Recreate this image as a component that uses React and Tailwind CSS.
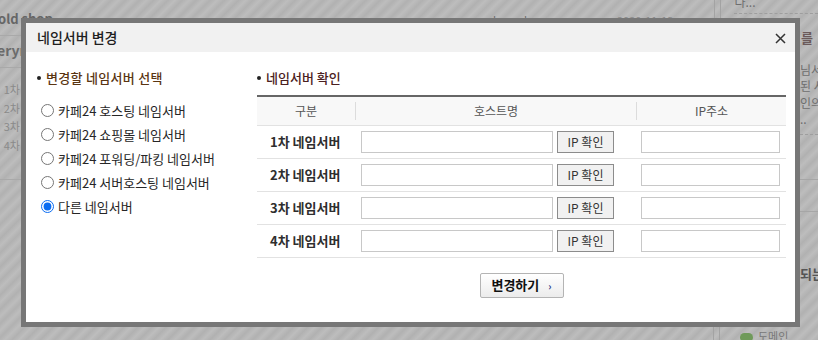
import React, { useState } from "react";

const rows = ["1차", "2차", "3차", "4차"];
const options = [
  "카페24 호스팅 네임서버",
  "카페24 쇼핑몰 네임서버",
  "카페24 포워딩/파킹 네임서버",
  "카페24 서버호스팅 네임서버",
  "다른 네임서버",
];

const kr = "font-['Noto_Sans_CJK_KR','Noto_Sans',sans-serif]";

export default function App() {
  const [picked, setPicked] = useState(4);

  return (
    <div
      className={`flex h-[340px] w-[818px] flex-col overflow-hidden bg-[repeating-linear-gradient(-45deg,#b1b1b1_0px,#bdbdbd_5px,#b1b1b1_10px)] ${kr}`}
    >
      {/* page behind the overlay, top strip */}
      <div className="flex h-[18px] shrink-0 text-[#6e6e6e]">
        <div className="mt-[11px] w-[60px] whitespace-nowrap text-[13px] leading-[16px] font-bold text-[#666] -ml-[2px]">
          old shop
        </div>
        <div className="ml-[435px] mt-[13px] flex w-[34px] justify-between text-[11px] leading-[14px]">
          <span>l</span>
          <span>l</span>
        </div>
        <div className="ml-[90px] mt-[13px] text-[11px] leading-[14px] text-[#8a8a8a]">2020-11-13</div>
        <div className="ml-[41px] h-full w-[7px] border-x border-[#a3a3a3]" />
        <div className="flex flex-1 flex-col pl-[13px]">
          <div className="-mt-[5px] text-[12px] leading-[14px]">다...</div>
          <div className="mt-[4px] border-b border-dashed border-[#9e9e9e]" />
        </div>
      </div>

      <div className="flex h-[309px] shrink-0">
        {/* page behind the overlay, left edge */}
        <div className="flex w-[21px] shrink-0 flex-col overflow-hidden text-[#7d7d7d]">
          <div className="border-b border-[#a9a9a9] mt-[17px]" />
          <div className="mt-[6px] whitespace-nowrap text-[14px] leading-[16px] font-bold text-[#6b6b6b] -ml-[3px]">
            eryn
          </div>
          <div className="mt-[9px] border-b border-[#a9a9a9]" />
          <div className="mt-[12px] flex flex-col items-end pr-[1px] text-[11px] leading-[18.5px] text-[#8a8a8a]">
            {rows.map((r) => (
              <span key={r}>{r}</span>
            ))}
          </div>
          <div className="mt-[25px] border-b border-[#a9a9a9]" />
        </div>

        {/* modal */}
        <div className="relative z-10 flex w-[779px] shrink-0 flex-col border-[5px] border-[#777777] bg-white">
          <div className="flex h-[29px] items-center justify-between bg-[#f1f1f1] pl-[11px] pr-[9px]">
            <span className="text-[14px] font-medium text-[#1e1e1e]">네임서버 변경</span>
            <svg width="11" height="11" viewBox="0 0 11 11" className="mt-[1px]">
              <path d="M1 1 L10 10 M10 1 L1 10" stroke="#333" strokeWidth="1.5" />
            </svg>
          </div>

          <div className="flex pl-[11px] pt-[16px]">
            <div className="flex w-[220px] shrink-0 flex-col">
              <div className="flex items-center gap-[5px] text-[13px] font-medium tracking-[0.3px] text-[#5a3512]">
                <span className="h-[4px] w-[4px] rounded-full bg-[#222]" />
                변경할 네임서버 선택
              </div>
              <div className="mt-[13px] flex flex-col gap-[4px] pl-[4px]">
                {options.map((o, i) => (
                  <label
                    key={o}
                    className="flex h-[20px] items-center gap-[4px] text-[13px] text-[#262626]"
                  >
                    <input
                      type="radio"
                      checked={picked === i}
                      onChange={() => setPicked(i)}
                      className="m-0 h-[13px] w-[13px] accent-[#0a6cf2]"
                    />
                    {o}
                  </label>
                ))}
              </div>
            </div>

            <div className="flex w-[529px] flex-col">
              <div className="flex items-center gap-[5px] text-[13px] font-medium text-[#4b2020]">
                <span className="h-[4px] w-[4px] rounded-full bg-[#222]" />
                네임서버 확인
              </div>

              <div className="mt-[7px] border-t-[2px] border-[#666]">
                <div className="grid h-[29px] grid-cols-[98px_281px_150px] items-center border-b border-[#e2e2e2] bg-[#f8f8f8] text-[12px] text-[#555]">
                  <div className="text-center">구분</div>
                  <div className="border-l border-[#dcdcdc] text-center">호스트명</div>
                  <div className="border-l border-[#dcdcdc] text-center">IP주소</div>
                </div>
                {rows.map((r) => (
                  <div
                    key={r}
                    className="grid h-[33px] grid-cols-[98px_281px_150px] items-center border-b border-[#e2e2e2]"
                  >
                    <div className="pl-[13px] text-[13px] font-bold text-[#2e2e2e]">
                      {r} 네임서버
                    </div>
                    <div className="flex items-center gap-[4px] pl-[6px]">
                      <input className="h-[22px] w-[192px] border border-[#c8c8c8] bg-white outline-none" />
                      <button className="h-[22px] w-[57px] border border-[#8c8c8c] bg-[#f1f1f1] text-[12px] text-[#333]">
                        IP 확인
                      </button>
                    </div>
                    <div className="pl-[5px]">
                      <input className="h-[22px] w-[139px] border border-[#c8c8c8] bg-white outline-none" />
                    </div>
                  </div>
                ))}
              </div>

              <div className="mt-[15px] flex justify-center">
                <button className="flex h-[25px] w-[84px] items-center justify-center gap-[9px] rounded-[2px] border border-[#b4b4b4] bg-gradient-to-b from-white to-[#ececec] text-[13px] font-bold text-[#111]">
                  변경하기
                  <span className="text-[10px] font-bold text-[#2b3b8a]">›</span>
                </button>
              </div>
            </div>
          </div>
        </div>

        {/* page behind the overlay, right edge */}
        <div className="flex min-w-0 flex-1 flex-col overflow-hidden text-[#6e6e6e]">
          <div className="mt-[10px] whitespace-nowrap pl-[1px] text-[13px] font-bold text-[#6b5a5a]">를</div>
          <div className="mt-[14px] flex flex-col whitespace-nowrap text-[12px] leading-[16.5px]">
            <span>님서</span>
            <span>된 사</span>
            <span>인의</span>
            <span>..</span>
          </div>
          <div className="mt-[6px] border-b border-dashed border-[#9e9e9e]" />
          <div className="mt-[44px] border-b border-[#a6a6a6]" />
          <div className="mt-[31px] border-b border-[#a6a6a6]" />
          <div className="mt-[52px] whitespace-nowrap text-[13px] font-bold text-[#555]">되는</div>
        </div>
      </div>

      {/* page behind the overlay, bottom strip */}
      <div className="flex flex-1">
        <div className="ml-[713px] h-full w-[7px] border-x border-[#a3a3a3]" />
        <div className="ml-[20px] mt-[3px] flex items-start gap-[5px] whitespace-nowrap text-[11px] leading-[12px] text-[#777]">
          <span className="mt-[3px] h-[9px] w-[13px] rounded-full bg-[#6f9a5a]" />
          도메인
        </div>
      </div>
    </div>
  );
}
